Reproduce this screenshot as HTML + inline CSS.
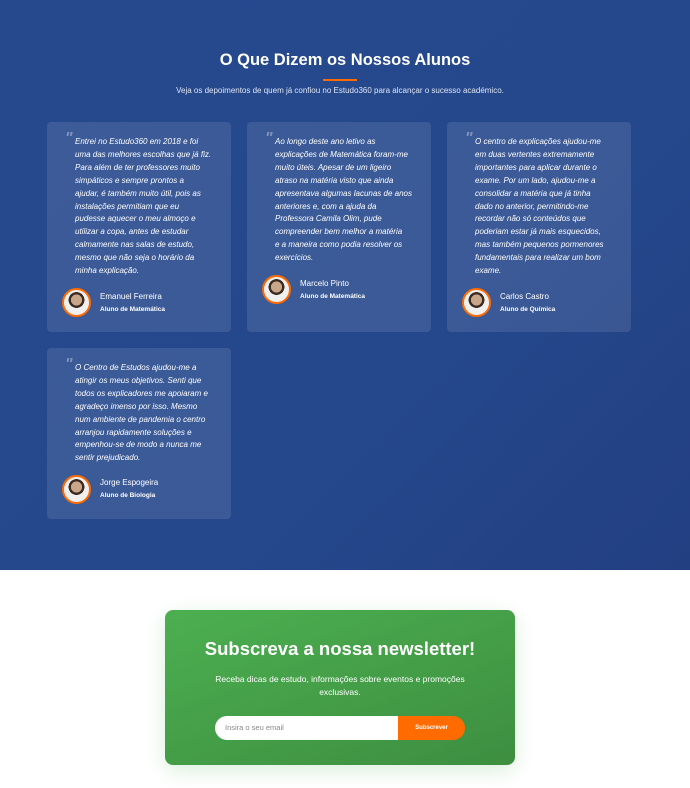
<!DOCTYPE html>
<html><head><meta charset="utf-8"><style>
*{margin:0;padding:0;box-sizing:border-box}
body{width:690px;height:788px;background:#fff;font-family:"Liberation Sans",sans-serif;overflow:hidden}
.top{position:absolute;left:0;top:0;width:690px;height:570px;background:linear-gradient(135deg,#26498e 0%,#25488c 60%,#223f82 100%)}
h1{position:absolute;top:51px;width:690px;text-align:center;color:#fff;font-size:16.5px;font-weight:bold}
.bar{position:absolute;left:323px;top:79px;width:34px;height:2px;background:#ff6b00}
.sub{position:absolute;top:86px;width:680px;text-align:center;color:#dfe6f3;font-size:8px}
.card{position:absolute;width:184px;background:rgba(255,255,255,0.1);border-radius:4px}
.q{position:absolute;left:18px;top:8px;color:rgba(255,255,255,0.35);font-size:16px;font-style:italic;font-weight:bold}
.t{position:absolute;left:28px;top:14px;white-space:nowrap;color:#fff;font-size:8px;font-style:italic;line-height:12.9px}
.av{position:absolute;left:15px;width:29px;height:29px;border-radius:50%;border:2px solid #ff6b00;background:radial-gradient(circle at 50% 40%,#c9a58a 0 28%,#3a2a20 29% 40%,#f0f0f0 41%)}
.n{position:absolute;left:53px;color:#fff;font-size:8px}
.r{position:absolute;left:53px;color:#fff;font-size:6.5px;font-weight:bold}
.nl{position:absolute;left:165px;top:610px;width:350px;height:155px;border-radius:8px;background:linear-gradient(160deg,#4caf50,#3d8e40);box-shadow:0 6px 20px rgba(76,175,80,0.2);text-align:center;color:#fff}
.nl h2{position:absolute;top:28px;width:100%;font-size:18.5px;font-weight:bold}
.nl p{position:absolute;top:63px;left:30px;width:290px;font-size:8.5px;line-height:13px}
.in{position:absolute;left:50px;top:106px;width:183px;height:24px;background:#fff;border-radius:12px 0 0 12px;color:#888;font-size:7.5px;line-height:24px;text-align:left;padding-left:10px}
.bt{position:absolute;left:233px;top:106px;width:67px;height:24px;background:#ff6b00;border-radius:0 12px 12px 0;font-size:6px;font-weight:bold;line-height:24px}
</style></head><body>
<div class="top">
<h1>O Que Dizem os Nossos Alunos</h1>
<div class="bar"></div>
<div class="sub">Veja os depoimentos de quem já confiou no Estudo360 para alcançar o sucesso académico.</div>

<div class="card" style="left:47px;top:122px;height:210px">
<div class="q">"</div>
<div class="t">Entrei no Estudo360 em 2018 e foi<br>uma das melhores escolhas que já fiz.<br>Para além de ter professores muito<br>simpáticos e sempre prontos a<br>ajudar, é também muito útil, pois as<br>instalações permitiam que eu<br>pudesse aquecer o meu almoço e<br>utilizar a copa, antes de estudar<br>calmamente nas salas de estudo,<br>mesmo que não seja o horário da<br>minha explicação.</div>
<div class="av" style="top:166px"></div>
<div class="n" style="top:170px">Emanuel Ferreira</div>
<div class="r" style="top:184px">Aluno de Matemática</div>
</div>

<div class="card" style="left:247px;top:122px;height:210px">
<div class="q">"</div>
<div class="t">Ao longo deste ano letivo as<br>explicações de Matemática foram-me<br>muito úteis. Apesar de um ligeiro<br>atraso na matéria visto que ainda<br>apresentava algumas lacunas de anos<br>anteriores e, com a ajuda da<br>Professora Camila Olim, pude<br>compreender bem melhor a matéria<br>e a maneira como podia resolver os<br>exercícios.</div>
<div class="av" style="top:153px"></div>
<div class="n" style="top:157px">Marcelo Pinto</div>
<div class="r" style="top:171px">Aluno de Matemática</div>
</div>

<div class="card" style="left:447px;top:122px;height:210px">
<div class="q">"</div>
<div class="t">O centro de explicações ajudou-me<br>em duas vertentes extremamente<br>importantes para aplicar durante o<br>exame. Por um lado, ajudou-me a<br>consolidar a matéria que já tinha<br>dado no anterior, permitindo-me<br>recordar não só conteúdos que<br>poderiam estar já mais esquecidos,<br>mas também pequenos pormenores<br>fundamentais para realizar um bom<br>exame.</div>
<div class="av" style="top:166px"></div>
<div class="n" style="top:170px">Carlos Castro</div>
<div class="r" style="top:184px">Aluno de Química</div>
</div>

<div class="card" style="left:47px;top:348px;height:171px">
<div class="q">"</div>
<div class="t">O Centro de Estudos ajudou-me a<br>atingir os meus objetivos. Senti que<br>todos os explicadores me apoiaram e<br>agradeço imenso por isso. Mesmo<br>num ambiente de pandemia o centro<br>arranjou rapidamente soluções e<br>empenhou-se de modo a nunca me<br>sentir prejudicado.</div>
<div class="av" style="top:127px"></div>
<div class="n" style="top:130px">Jorge Espogeira</div>
<div class="r" style="top:144px">Aluno de Biologia</div>
</div>
</div>

<div class="nl">
<h2>Subscreva a nossa newsletter!</h2>
<p>Receba dicas de estudo, informações sobre eventos e promoções exclusivas.</p>
<div class="in">Insira o seu email</div>
<div class="bt">Subscrever</div>
</div>
</body></html>
